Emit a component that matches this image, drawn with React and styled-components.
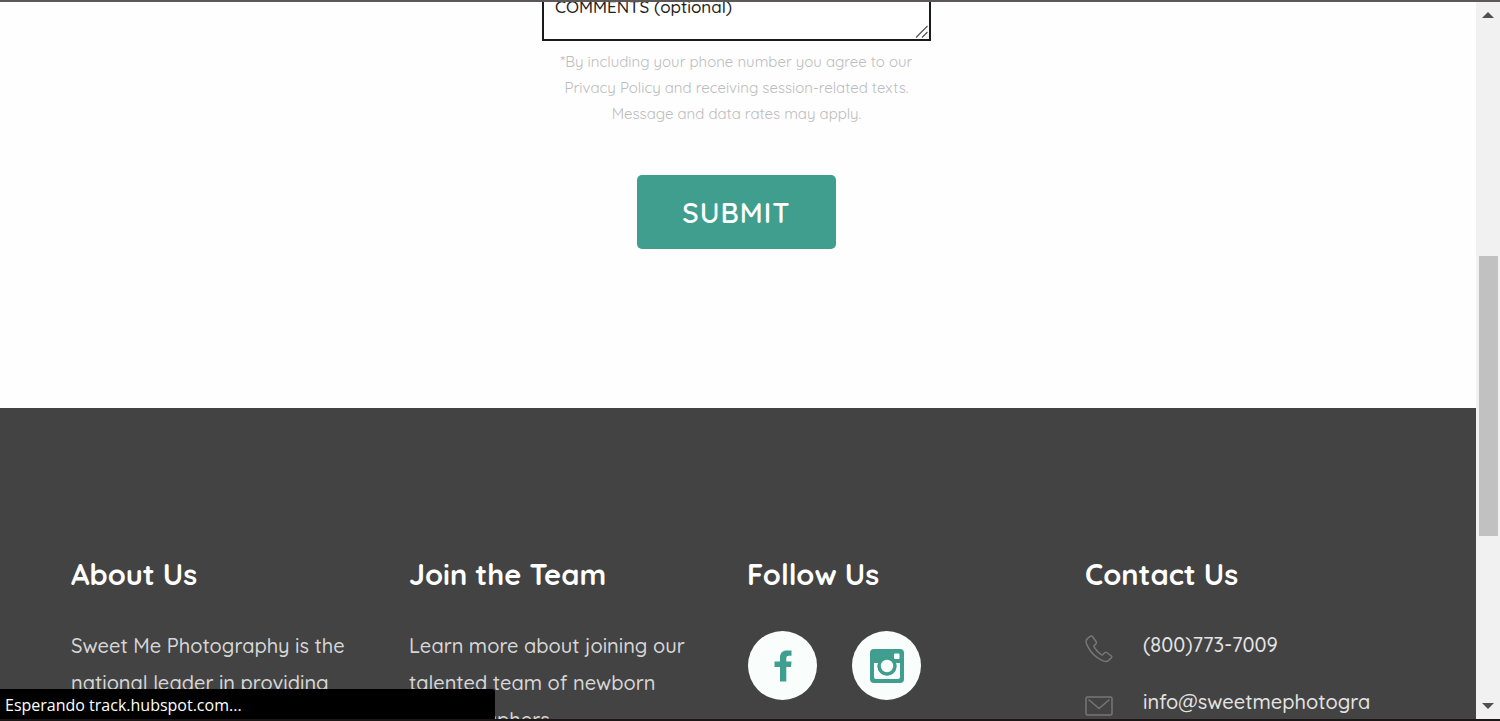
import React from 'react';
import styled, { createGlobalStyle } from 'styled-components';

const GlobalStyles = createGlobalStyle`
  *,
  *::before,
  *::after {
    box-sizing: border-box;
  }

  :root {
    --color-accent: #3f9e8d;
    --color-footer: #434343;
    --color-footer-text: #d6d6d6;
    --color-muted: #bcbcbc;
    --font-body: Quicksand, Lato, sans-serif;
    --font-system: 'Segoe UI', 'Open Sans', sans-serif;
  }

  body {
    margin: 0;
    font-family: var(--font-body);
  }

  h2,
  p,
  ul {
    margin: 0;
    padding: 0;
  }
`;

const Window = styled.div`
  position: relative;
  display: grid;
  grid-template-columns: 1fr 24px;
  height: 100vh;
  overflow: hidden;
  border-top: 2px solid #5c5858;
  border-bottom: 2px solid #1c1616;
`;

const Page = styled.div`
  min-height: 0;
  overflow: hidden;
  background-color: #fefefe;
`;

const StyledForm = styled.form`
  display: flex;
  flex-direction: column;
  align-items: center;
  margin-top: -41px;
  padding: 0 3px 159px 0;

  p {
    max-width: 380px;
    margin-top: 8px;
    font-size: 15px;
    line-height: 26px;
    text-align: center;
    color: var(--color-muted);
  }
`;

const CommentsField = styled.div`
  position: relative;
  width: 389px;

  textarea {
    display: block;
    width: 100%;
    height: 80px;
    padding: 32px 11px 0;
    border: 2px solid #1a1a1a;
    border-radius: 0;
    background-color: #fff;
    font-family: inherit;
    font-size: 17px;
    font-weight: 500;
    line-height: 24px;
    color: #222;
    resize: none;
    overflow: hidden;

    &::placeholder {
      color: #222;
      opacity: 1;
    }
  }

  svg {
    position: absolute;
    right: 2px;
    bottom: 2px;
    pointer-events: none;
  }
`;

const SubmitButton = styled.button`
  margin-top: 48px;
  padding: 19px 45px 18px;
  border: 0;
  border-radius: 5px;
  background-color: var(--color-accent);
  font-family: inherit;
  font-size: 28px;
  font-weight: 600;
  line-height: 37px;
  letter-spacing: 1px;
  color: #fff;
`;

const Footer = styled.footer`
  display: grid;
  grid-template-columns: repeat(4, minmax(0, 1fr));
  gap: 18px;
  padding: 148px 71px 80px;
  background-color: var(--color-footer);
`;

const FooterColumn = styled.section`
  h2 {
    margin-bottom: 35px;
    font-size: 29px;
    font-weight: 700;
    line-height: 36px;
    color: #fff;
  }

  p {
    font-size: 20px;
    font-weight: 500;
    line-height: 37px;
    color: var(--color-footer-text);
  }
`;

const SocialList = styled.ul`
  display: flex;
  gap: 35px;
  padding: 4px 1px 0;
  list-style: none;
`;

const SocialLink = styled.a`
  display: flex;
  align-items: center;
  justify-content: center;
  width: 69px;
  height: 69px;
  border-radius: 50%;
  background-color: #f9fefc;
  color: var(--color-accent);
`;

const ContactList = styled.ul`
  display: flex;
  flex-direction: column;
  gap: 21px;
  list-style: none;
`;

const ContactLink = styled.a`
  display: flex;
  align-items: center;
  gap: 30px;
  font-size: 20px;
  font-weight: 500;
  line-height: 36px;
  text-decoration: none;
  color: #e4e4e4;

  svg {
    flex: none;
    align-self: flex-end;
    color: #777;
  }
`;

const Scrollbar = styled.div`
  display: flex;
  flex-direction: column;
  background-color: #f1f1f1;

  button {
    display: flex;
    align-items: center;
    justify-content: center;
    height: 26px;
    padding: 0;
    border: 0;
    background-color: transparent;
    color: #505050;
  }
`;

const Track = styled.div`
  flex: 1;
  display: grid;
  grid-template-rows: 228fr 280fr 157fr;
  padding: 0 2px 0 3px;
`;

const Thumb = styled.div`
  grid-row: 2;
  background-color: #c1c1c1;
`;

const StatusBar = styled.div`
  position: absolute;
  left: 0;
  bottom: 0;
  width: 33%;
  padding: 4px 5px 2px;
  border-top-right-radius: 3px;
  background-color: #000;
  font-family: var(--font-system);
  font-size: 16px;
  line-height: 24px;
  color: #fff;
`;

const FacebookIcon = () => (
  <svg width='18' height='32' viewBox='0 0 18 32' fill='currentColor' aria-hidden='true'>
    <path d='M17.5.5v5.2h-2.7c-1.9 0-2.500 1-2.500 2.700v3.200h5.200l-.500 5.400h-4.700V31.500H6V17H.5v-5.400H6V7.600C6 3 8.700.500 13 .500Z' />
  </svg>
);

const InstagramIcon = () => (
  <svg width='36' height='36' viewBox='0 0 36 36' aria-hidden='true'>
    <rect x='1' y='1' width='34' height='34' rx='4' fill='currentColor' />
    <path d='M5 15h4a9.500 9.500 0 1 0 18 0h4v14a2 2 0 0 1-2 2H7a2 2 0 0 1-2-2Z' fill='#f9fefc' />
    <circle cx='18' cy='18' r='9.500' fill='currentColor' />
    <circle cx='18' cy='18' r='6.200' fill='#f9fefc' />
    <rect x='25' y='5.500' width='5.500' height='5.500' rx='1' fill='#f9fefc' />
  </svg>
);

const PhoneIcon = () => (
  <svg width='28' height='28' viewBox='0 0 28 28' fill='none' stroke='currentColor' strokeWidth='1.500' strokeLinejoin='round' aria-hidden='true'>
    <path d='M5.500 1.200 2.400 3.600C.600 5.200 1 8 2.300 10.600c3 6.200 8.200 11.700 14.700 14.800 2.300 1.100 4.800 1.500 6.400.200l3-2.800c.600-.700.500-1.300 0-1.800l-4.700-3.500c-.700-.500-1.400-.400-2 .200l-1.800 1.900c-.500.400-1.100.400-1.700 0-2.900-2-5.200-4.500-7-7.500-.400-.700-.300-1.200.200-1.700L11 8.700c.600-.600.600-1.200.200-1.900L7.500 1.500c-.500-.700-1.300-.800-2-.300Z' />
  </svg>
);

const MailIcon = () => (
  <svg width='28' height='28' viewBox='0 0 28 28' fill='none' stroke='currentColor' strokeWidth='1.500' strokeLinejoin='round' aria-hidden='true'>
    <rect x='1' y='5' width='26' height='18' rx='1.500' />
    <path d='m3.500 7.500 10.500 9 10.500-9' />
  </svg>
);

const GripIcon = () => (
  <svg width='14' height='14' viewBox='0 0 14 14' fill='none' stroke='#555' strokeWidth='1.200' aria-hidden='true'>
    <path d='M1 12.500 12.500 1M7 12.500 12.500 7' />
  </svg>
);

function App() {
  return (
    <>
      <GlobalStyles />
      <Window>
        <Page>
          <StyledForm>
            <CommentsField>
              <textarea placeholder='COMMENTS (optional)' aria-label='COMMENTS (optional)' />
              <GripIcon />
            </CommentsField>
            <p>
              *By including your phone number you agree to our
              <br />
              Privacy Policy and receiving session-related texts.
              <br />
              Message and data rates may apply.
            </p>
            <SubmitButton type='button'>SUBMIT</SubmitButton>
          </StyledForm>
          <Footer>
            <FooterColumn>
              <h2>About Us</h2>
              <p>
                Sweet Me Photography is the
                <br />
                national leader in providing
              </p>
            </FooterColumn>
            <FooterColumn>
              <h2>Join the Team</h2>
              <p>
                Learn more about joining our
                <br />
                talented team of newborn
                <br />
                photographers.
              </p>
            </FooterColumn>
            <FooterColumn>
              <h2>Follow Us</h2>
              <SocialList>
                <li>
                  <SocialLink href='#facebook' aria-label='Facebook'>
                    <FacebookIcon />
                  </SocialLink>
                </li>
                <li>
                  <SocialLink href='#instagram' aria-label='Instagram'>
                    <InstagramIcon />
                  </SocialLink>
                </li>
              </SocialList>
            </FooterColumn>
            <FooterColumn>
              <h2>Contact Us</h2>
              <ContactList>
                <li>
                  <ContactLink href='tel:8007737009'>
                    <PhoneIcon />
                    (800)773-7009
                  </ContactLink>
                </li>
                <li>
                  <ContactLink href='#email'>
                    <MailIcon />
                    info@sweetmephotogra
                  </ContactLink>
                </li>
              </ContactList>
            </FooterColumn>
          </Footer>
        </Page>
        <Scrollbar>
          <button type='button' aria-label='Scroll up'>
            <svg width='12' height='6' viewBox='0 0 12 6' fill='currentColor'>
              <path d='M6 0l6 6H0Z' />
            </svg>
          </button>
          <Track>
            <Thumb />
          </Track>
          <button type='button' aria-label='Scroll down'>
            <svg width='12' height='6' viewBox='0 0 12 6' fill='currentColor'>
              <path d='M0 0h12L6 6Z' />
            </svg>
          </button>
        </Scrollbar>
        <StatusBar>Esperando track.hubspot.com...</StatusBar>
      </Window>
    </>
  );
}

export default App;
